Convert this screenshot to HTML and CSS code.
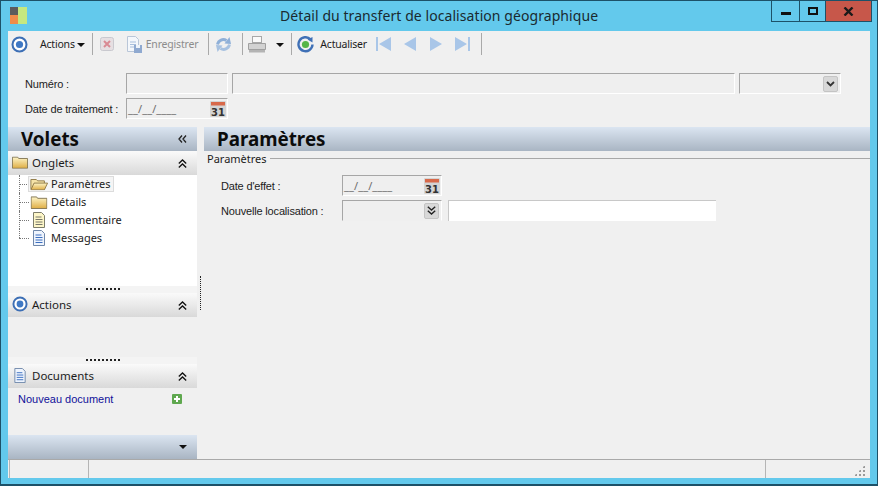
FILE: index.html
```html
<!DOCTYPE html>
<html lang="fr">
<head>
  <meta charset="UTF-8">
  <title>Détail du transfert de localisation géographique</title>
  <link rel="stylesheet" href="styles.css">
</head>
<body>
  <svg class="defs" width="0" height="0">
    <defs>
      <linearGradient id="folder-fill" x1="0" y1="0" x2="0" y2="1">
        <stop offset="0" stop-color="#fdf4c6"/>
        <stop offset="1" stop-color="#dfae45"/>
      </linearGradient>
    </defs>
    <symbol id="target" viewBox="0 0 18 18">
      <circle cx="9" cy="9" r="7.400" fill="#fff" stroke="#3d6fb5" stroke-width="2.200"/>
      <circle cx="9" cy="9" r="3.800" fill="#3f78c4"/>
    </symbol>
    <symbol id="folder" viewBox="0 0 18 14">
      <path d="M.5 2V1h6l1 1.500h10v11H.5z" fill="url(#folder-fill)" stroke="#7f7350"/>
    </symbol>
    <symbol id="folder-open" viewBox="0 0 20 14">
      <path d="M1 12.500V2h6l1.500 1.500H16V6" fill="#f5e3a8" stroke="#8b7440"/>
      <path d="M1 13.500l3.500-7.500H19.500L16 13.500z" fill="url(#folder-fill)" stroke="#8b7440"/>
    </symbol>
    <symbol id="note" viewBox="0 0 14 16">
      <path d="M1.500 .5h8l3 3v12h-11z" fill="#fdf6c8" stroke="#7d7d6b"/>
      <path d="M3.500 5h6M3.500 7.500h7M3.500 10h7M3.500 12.500h7" stroke="#77776a"/>
    </symbol>
    <symbol id="doc" viewBox="0 0 14 16">
      <path d="M1.500 .5h8l3 3v12h-11z" fill="#eef4fd" stroke="#6f87aa"/>
      <path d="M3.500 5h6M3.500 7.500h7M3.500 10h7M3.500 12.500h7" stroke="#3c6fc0"/>
    </symbol>
  </svg>

  <div class="window">
    <header class="titlebar">
      <svg class="app-logo" width="17" height="17" viewBox="0 0 17 17">
        <rect width="8" height="8" fill="#5c5c5c"/>
        <rect y="8" width="8" height="9" fill="#f08c4a"/>
        <rect x="8" width="9" height="17" fill="#c5e87f"/>
      </svg>
      <span class="title">Détail du transfert de localisation géographique</span>
      <div class="win-buttons">
        <span class="win-btn btn-min"><i class="glyph-min"></i></span>
        <span class="win-btn btn-max"><i class="glyph-max"></i></span>
        <span class="win-btn btn-close">
          <svg width="11" height="9" viewBox="0 0 11 9"><path d="M1.500 .5l8 8M9.500 .5l-8 8" stroke="#1a1a1a" stroke-width="2.400"/></svg>
        </span>
      </div>
    </header>

    <div class="content">
      <div class="toolbar">
        <svg width="17" height="17"><use href="#target"/></svg>
        <span class="tool-text actions-label">Actions</span><i class="caret"></i>
        <i class="sep sep-actions"></i>
        <svg class="tool-cancel" width="14" height="14" viewBox="0 0 14 14">
          <rect x=".5" y=".5" width="13" height="13" rx="2" fill="#e6dfe2" stroke="#c9c9cf"/>
          <path d="M4 4l6 6M10 4l-6 6" stroke="#d98a94" stroke-width="2"/>
        </svg>
        <svg class="tool-save" width="17" height="17" viewBox="0 0 17 17">
          <path d="M1.500 .5h8l3 3v12h-11z" fill="#f4f7fb" stroke="#b9c6d8"/>
          <path d="M4 6h6M4 8.500h6M4 11h4" stroke="#a9bfdc"/>
          <rect x="8" y="9" width="8" height="8" fill="#8fa9d0"/>
          <rect x="10" y="9" width="4" height="3" fill="#eef3f9"/>
        </svg>
        <span class="tool-text muted">Enregistrer</span>
        <i class="sep sep-save"></i>
        <svg width="17" height="17" viewBox="0 0 17 17">
          <path d="M2.500 8.500C3.500 4 8 2.500 11.500 4.500" fill="none" stroke="#8fb0d8" stroke-width="3"/>
          <path d="M9.500 7.500L16 8l-1.500-7z" fill="#8fb0d8"/>
          <path d="M14.500 8.500C13.500 13 9 14.500 5.500 12.500" fill="none" stroke="#a7c1e0" stroke-width="3"/>
          <path d="M7.500 9.500L1 9l1.500 7z" fill="#a7c1e0"/>
        </svg>
        <i class="sep sep-sync"></i>
        <svg width="18" height="17" viewBox="0 0 18 17">
          <rect x="4.500" y=".5" width="9" height="6" fill="#fafafa" stroke="#a8a8a8"/>
          <path d="M.5 7.500h17v6H.5z" fill="#d2d2d2" stroke="#a0a0a0"/>
          <rect x="1" y="14" width="16" height="2.500" fill="#b4b4b4"/>
        </svg>
        <i class="caret print-caret"></i>
        <i class="sep sep-print"></i>
        <svg width="17" height="17" viewBox="0 0 17 17">
          <path d="M13.500 3.300A7 7 0 1 0 15.500 8.500" fill="none" stroke="#3f70b6" stroke-width="2.400"/>
          <path d="M10.500 3.500l5-2.500v5.500z" fill="#3f70b6"/>
          <circle cx="8.500" cy="8.500" r="3.600" fill="#56b548"/>
        </svg>
        <span class="tool-text refresh-label">Actualiser</span>
        <svg class="nav-first" width="15" height="14" viewBox="0 0 15 14"><path d="M0 0h2v14H0zM15 0v14L3 7z" fill="#a9c6e8"/></svg>
        <svg class="nav-prev" width="12" height="14" viewBox="0 0 12 14"><path d="M12 0v14L0 7z" fill="#a9c6e8"/></svg>
        <svg class="nav-next" width="12" height="14" viewBox="0 0 12 14"><path d="M0 0v14l12-7z" fill="#a9c6e8"/></svg>
        <svg class="nav-last" width="15" height="14" viewBox="0 0 15 14"><path d="M13 0h2v14h-2zM0 0v14l12-7z" fill="#a9c6e8"/></svg>
        <i class="sep sep-last"></i>
      </div>

      <div class="head-form">
        <div class="form-row">
          <label class="head-label">Numéro :</label>
          <span class="field num-field"></span>
          <span class="field wide-field"></span>
          <span class="field type-field">
            <span class="drop-btn">
              <svg width="9" height="6" viewBox="0 0 9 6"><path d="M1 1l3.500 3.500L8 1" fill="none" stroke="#333" stroke-width="1.800"/></svg>
            </span>
          </span>
        </div>
        <div class="form-row">
          <label class="head-label">Date de traitement :</label>
          <span class="field num-field date-field">__/__/____
            <svg class="cal" width="16" height="16" viewBox="0 0 16 16">
              <rect width="16" height="16" rx="1" fill="#d4d4d4"/>
              <rect x="1" y="1" width="14" height="3.500" fill="#d8694a"/>
              <text x="8" y="14.500" text-anchor="middle" class="cal-num">31</text>
            </svg>
          </span>
        </div>
      </div>

      <div class="panels">
        <aside class="side">
          <div class="band">
            <span class="band-title">Volets</span>
            <svg class="chev" width="9" height="8" viewBox="0 0 9 8"><path d="M4 .5L1 4l3 3.500M8 .5L5 4l3 3.500" fill="none" stroke="#222" stroke-width="1.300"/></svg>
          </div>

          <div class="pane-head">
            <svg class="pane-icon" width="15" height="13" viewBox="0 0 18 14"><use href="#folder"/></svg>
            <span>Onglets</span>
            <svg class="chev" width="9" height="9" viewBox="0 0 9 9"><path d="M.8 4.500L4.500 1l3.700 3.500M.8 8.500L4.500 5l3.700 3.500" fill="none" stroke="#111" stroke-width="1.300"/></svg>
          </div>
          <ul class="tree">
            <li><div class="node selected"><svg width="18" height="14" viewBox="0 0 20 14"><use href="#folder-open"/></svg><span>Paramètres</span></div></li>
            <li><div class="node"><svg width="17" height="13" viewBox="0 0 18 14"><use href="#folder"/></svg><span>Détails</span></div></li>
            <li><div class="node"><svg width="14" height="16" viewBox="0 0 14 16"><use href="#note"/></svg><span>Commentaire</span></div></li>
            <li><div class="node"><svg width="14" height="16" viewBox="0 0 14 16"><use href="#doc"/></svg><span>Messages</span></div></li>
          </ul>
          <div class="grip"></div>

          <div class="pane-head">
            <svg class="pane-icon" width="16" height="16"><use href="#target"/></svg>
            <span>Actions</span>
            <svg class="chev" width="9" height="9" viewBox="0 0 9 9"><path d="M.8 4.500L4.500 1l3.700 3.500M.8 8.500L4.500 5l3.700 3.500" fill="none" stroke="#111" stroke-width="1.300"/></svg>
          </div>
          <div class="pane-empty"></div>
          <div class="grip"></div>

          <div class="pane-head">
            <svg class="pane-icon" width="14" height="15" viewBox="0 0 14 16"><use href="#doc"/></svg>
            <span>Documents</span>
            <svg class="chev" width="9" height="9" viewBox="0 0 9 9"><path d="M.8 4.500L4.500 1l3.700 3.500M.8 8.500L4.500 5l3.700 3.500" fill="none" stroke="#111" stroke-width="1.300"/></svg>
          </div>
          <div class="doc-pane">
            <a class="doc-link">Nouveau document</a>
            <svg width="10" height="10" viewBox="0 0 10 10"><rect width="10" height="10" rx="1" fill="#5fa84f"/><path d="M5 2v6M2 5h6" stroke="#fff" stroke-width="2"/></svg>
          </div>
          <div class="band band-foot"><i class="caret foot-caret"></i></div>
        </aside>

        <div class="dots"></div>

        <main class="main">
          <div class="band"><span class="band-title">Paramètres</span></div>
          <div class="group-head"><span>Paramètres</span><i class="group-line"></i></div>
          <div class="main-form">
            <div class="form-row">
              <label class="main-label">Date d'effet :</label>
              <span class="field num-field date-field">__/__/____
                <svg class="cal" width="16" height="16" viewBox="0 0 16 16">
                  <rect width="16" height="16" rx="1" fill="#d4d4d4"/>
                  <rect x="1" y="1" width="14" height="3.500" fill="#d8694a"/>
                  <text x="8" y="14.500" text-anchor="middle" class="cal-num">31</text>
                </svg>
              </span>
            </div>
            <div class="form-row">
              <label class="main-label">Nouvelle localisation :</label>
              <span class="field num-field combo-field">
                <span class="drop-btn">
                  <svg width="9" height="9" viewBox="0 0 9 9"><path d="M.8 .8l3.700 3.200L8.200 .8M.8 4.800L4.500 8l3.700-3.200" fill="none" stroke="#222" stroke-width="1.400"/></svg>
                </span>
              </span>
              <span class="text-input"></span>
            </div>
          </div>
        </main>
      </div>

      <footer class="statusbar">
        <span class="status-cell cell-a"></span>
        <span class="status-cell cell-b"></span>
        <span class="status-cell cell-c"><i class="size-grip"></i></span>
      </footer>
    </div>
  </div>
</body>
</html>
```

FILE: styles.css
```css
* { box-sizing: border-box; }
html, body { margin: 0; padding: 0; }
body {
  width: 878px;
  height: 486px;
  overflow: hidden;
  font-family: "Noto Sans", sans-serif;
  font-size: 11px;
  color: #1c1c1c;
}
.defs { position: absolute; }
.cal-num { font: bold 10px "DejaVu Sans", sans-serif; fill: #333; }
i { display: block; }

.window {
  width: 878px;
  height: 486px;
  background: #63c9ec;
  border: 1px solid #1d5168;
  border-width: 1px 1px 2px 1px;
  display: flex;
  flex-direction: column;
}
.titlebar {
  height: 30px;
  flex: none;
  display: flex;
  align-items: flex-start;
  position: relative;
}
.app-logo { margin: 6px 0 0 9px; }
.title {
  position: absolute;
  left: 279px;
  top: 5px;
  font-size: 14px;
  letter-spacing: .07px;
  line-height: 20px;
  color: #1a2a30;
  white-space: nowrap;
}
.win-buttons { margin-left: auto; margin-right: 5px; display: flex; height: 21px; }
.win-btn {
  height: 21px;
  border: 1px solid #1d5168;
  border-top: 0;
  display: flex;
  align-items: center;
  justify-content: center;
}
.btn-min { width: 29px; }
.btn-max { width: 26px; border-left: 0; }
.btn-close { width: 46px; border-left: 0; background: #c7574a; }
.glyph-min { width: 10px; height: 3px; background: #111; margin-top: 4px; }
.glyph-max { width: 10px; height: 8px; border: 2px solid #111; margin-top: -1px; }

.content {
  width: 862px;
  height: 447px;
  margin-left: 7px;
  background: #f0f0f0;
  display: flex;
  flex-direction: column;
}

.toolbar {
  height: 26px;
  flex: none;
  display: flex;
  align-items: center;
  padding-left: 3px;
}
.toolbar svg { flex: none; }
.tool-text { white-space: nowrap; font-size: 10.500px; letter-spacing: -.2px; }
.muted { color: #8c8c8c; margin-left: 3px; }
.actions-label { margin-left: 12px; }
.caret {
  width: 0;
  height: 0;
  margin: 1px 0 0 2px;
  border-style: solid;
  border-width: 4px 4px 0 4px;
  border-color: #111 transparent transparent;
}
.sep { width: 1px; height: 22px; background: #a9a9a9; margin: 0 6px; flex: none; }
.sep-actions { margin-left: 7px; }
.tool-cancel { margin-left: 1px; }
.tool-save { margin-left: 12px; }
.sep-save { margin-left: 10px; }
.sep-sync { margin-left: 10px; margin-right: 5px; }
.print-caret { margin-left: 10px; }
.sep-print { margin-left: 7px; margin-right: 5px; }
.refresh-label { margin-left: 6px; }
.nav-first { margin-left: 9px; }
.nav-prev { margin-left: 13px; }
.nav-next { margin-left: 14px; }
.nav-last { margin-left: 13px; }
.sep-last { margin-left: 11px; }

.head-form { padding: 15px 0 0 17px; height: 70px; flex: none; }
.form-row { display: flex; align-items: center; gap: 4px; height: 23px; }
.form-row + .form-row { margin-top: 2px; }
.head-label, .main-label {
  font-family: "Liberation Sans", sans-serif;
  font-size: 11px;
  letter-spacing: -.17px;
  white-space: nowrap;
}
.head-label { width: 97px; }
.main-label { width: 121px; }
.field {
  height: 21px;
  background: #efefef;
  border: 1px solid #a6a6a6;
  border-right-color: #fff;
  border-bottom-color: #fff;
  display: flex;
  align-items: center;
  padding-left: 1px;
  color: #6d6d6d;
  position: relative;
}
.num-field { width: 102px; }
.wide-field { width: 503px; }
.type-field { width: 102px; }
.date-field { letter-spacing: .1px; }
.cal { margin-left: auto; margin-right: 1px; }
.drop-btn {
  width: 15px;
  height: 16px;
  margin-left: auto;
  margin-right: 2px;
  background: #d8d8d8;
  border: 1px solid #c4c4c4;
  border-radius: 2px;
  display: flex;
  align-items: center;
  justify-content: center;
}
.combo-field { border-bottom-color: #efefef; }

.panels { flex: 1; display: flex; min-height: 0; position: relative; }
.side { width: 189px; flex: none; display: flex; flex-direction: column; }
.main { flex: 1; min-width: 0; margin-left: 7px; }
.dots {
  position: absolute;
  left: 192px;
  top: 149px;
  height: 34px;
  border-left: 1px dotted #222;
}

.band {
  height: 24px;
  flex: none;
  background: linear-gradient(#dbe5f1, #a9b5c3);
  display: flex;
  align-items: center;
  position: relative;
}
.band-title {
  font-size: 18.800px;
  font-weight: 700;
  color: #0c0c0c;
  margin: -1px 0 0 13px;
  line-height: 24px;
}
.chev { position: absolute; right: 10px; top: 8px; }

.pane-head {
  height: 24px;
  flex: none;
  background: linear-gradient(#fafafa, #d9d9d9);
  display: flex;
  align-items: center;
  font-size: 11.500px;
  position: relative;
  padding: 0 0 2px 4px;
  gap: 4px;
}
.pane-icon { flex: none; width: 16px; }

.tree {
  list-style: none;
  margin: 0;
  padding: 0 0 0 21px;
  height: 111px;
  background: #fff;
  flex: none;
  font-size: 11px;
}
.tree li {
  height: 18px;
  display: flex;
  align-items: center;
  position: relative;
}
.node {
  display: flex;
  align-items: center;
  gap: 3px;
  height: 16px;
  padding-left: 1px;
  position: relative;
  z-index: 1;
}
.node svg { width: 18px; flex: none; }
.node span { margin-top: -1px; }
.selected {
  width: 86px;
  margin-left: -1px;
  padding-left: 2px;
  background: #f5f5f5;
  outline: 1px solid #dcdcdc;
  outline-offset: -1px;
}
.tree li::before {
  content: "";
  position: absolute;
  left: -10px;
  width: 10px;
  top: 9px;
  border-top: 1px dotted #777;
}
.tree li::after {
  content: "";
  position: absolute;
  left: -10px;
  top: 0;
  height: 18px;
  border-left: 1px dotted #777;
}
.tree li:last-child::after { height: 9px; }
.grip {
  height: 7px;
  flex: none;
  margin: 0;
  background:
    repeating-linear-gradient(90deg, #222 0 2px, transparent 2px 4px) 78px 2px / 34px 2px no-repeat,
    #f4f4f4;
}
.pane-empty { height: 40px; flex: none; }
.doc-pane {
  flex: 1;
  display: flex;
  align-items: flex-start;
  justify-content: space-between;
  padding: 4px 15px 0 10px;
}
.doc-pane svg { margin-top: 2px; }
.doc-link { color: #10109a; font-family: "Liberation Sans", sans-serif; font-size: 11px; line-height: 15px; }
.band-foot { justify-content: flex-end; padding-right: 10px; }
.foot-caret { margin: 0; }

.group-head {
  display: flex;
  align-items: center;
  height: 14px;
  padding-left: 3px;
}
.group-line { flex: 1; height: 1px; background: #a8a8a8; margin-left: 3px; }
.main-form { padding: 9px 0 0 17px; }
.main-form .form-row { gap: 0; }
.main-form .num-field { width: 100px; }
.main-form .text-input {
  width: 268px;
  height: 21px;
  background: #fff;
  border: 1px solid #c8c8c8;
  border-right: 0;
  border-bottom: 0;
  margin-left: 6px;
}

.statusbar {
  height: 19px;
  flex: none;
  display: flex;
  border-top: 1px solid #a9a9a9;
  padding-left: 1px;
  background: #f0f0f0;
}
.status-cell { border-right: 1px solid #b5b5b5; border-left: 1px solid #b5b5b5; }
.cell-a { width: 80px; }
.cell-b { flex: 1; border-left: 0; }
.cell-c { width: 104px; border: 0; position: relative; }
.size-grip {
  position: absolute;
  right: 5px;
  bottom: 2px;
  width: 11px;
  height: 11px;
  background-image: radial-gradient(circle, #9a9a9a 1px, transparent 1.100px);
  background-size: 4px 4px;
  clip-path: polygon(100% 0, 100% 100%, 0 100%);
}
```
